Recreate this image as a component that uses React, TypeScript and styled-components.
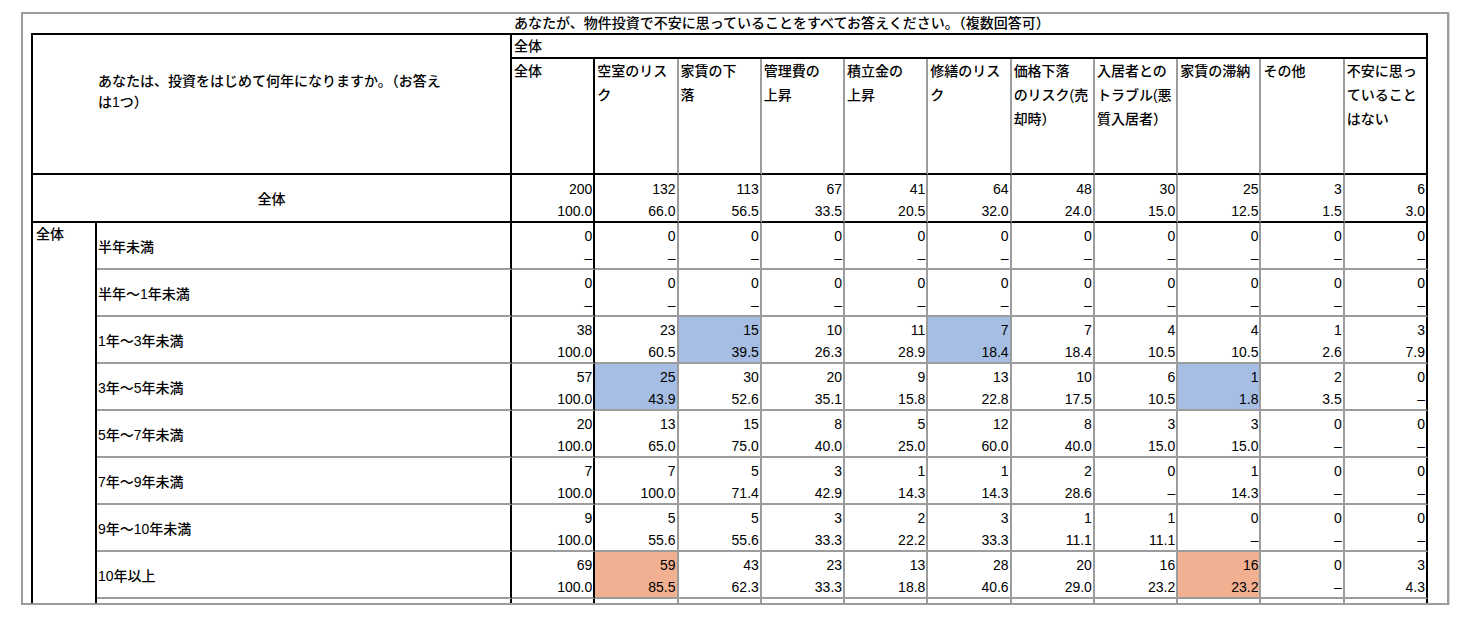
import React from "react";
import styled, { createGlobalStyle } from "styled-components";

const GlobalStyle = createGlobalStyle`
  html, body { margin: 0; padding: 0; background: #fff; }
  body {
    font-family: "Liberation Sans", "Noto Sans CJK JP", sans-serif;
    color: #000;
  }
  *, *::before, *::after { box-sizing: border-box; }
`;

const SOLID = "2px solid #000";
const DOTTED = "2px solid #9c9c9c";

const Page = styled.div`
  padding: 12px 0 0 21px;
`;

const Frame = styled.div`
  width: 1428px;
  height: 593px;
  border: 2px solid #9c9c9c;
  box-shadow: 1px 1px 0 #d6d6d6;
  overflow: hidden;
  padding-left: 8px;
  background: #fff;
`;

const TitleRow = styled.div`
  display: grid;
  grid-template-columns: 480px 1fr;
  width: 1397px;
  height: 19px;
`;

const Title = styled.div`
  grid-column: 2;
  padding-left: 3px;
  font-size: 14px;
  font-weight: 500;
  line-height: 19px;
  white-space: nowrap;
`;

const Sheet = styled.div`
  display: grid;
  width: 1397px;
  grid-template-columns: 64px 415px repeat(11, 1fr);
  grid-template-rows: 24px 116px 48px repeat(9, 47px);
  border-left: ${SOLID};
  border-top: ${SOLID};
`;

const Corner = styled.div`
  grid-column: 1 / 3;
  grid-row: 1 / 3;
  border-right: ${SOLID};
  border-bottom: ${SOLID};
  padding: 36px 0 0 65px;
  font-size: 14px;
  font-weight: 500;
  line-height: 21px;
`;

const SuperHead = styled.div`
  grid-column: 3 / -1;
  grid-row: 1;
  border-right: ${SOLID};
  border-bottom: ${SOLID};
  padding-left: 2px;
  font-size: 14px;
  font-weight: 500;
  line-height: 22px;
`;

type Edge = "solid" | "dotted";

const HeadCell = styled.div<{ $right: Edge }>`
  grid-row: 2;
  border-right: ${(p) => (p.$right === "solid" ? SOLID : DOTTED)};
  border-bottom: ${SOLID};
  padding-left: 2px;
  font-size: 14px;
  font-weight: 500;
  line-height: 24px;
  white-space: nowrap;
`;

const TotalLabel = styled.div`
  grid-column: 1 / 3;
  grid-row: 3;
  border-right: ${SOLID};
  border-bottom: ${SOLID};
  display: flex;
  align-items: center;
  justify-content: center;
  font-size: 14px;
  font-weight: 500;
`;

const GroupLabel = styled.div`
  grid-column: 1;
  grid-row: 4 / span 9;
  border-right: ${SOLID};
  padding: 1px 3px;
  font-size: 14px;
  font-weight: 500;
  line-height: 20px;
`;

const RowLabel = styled.div`
  grid-column: 2;
  border-right: ${SOLID};
  border-bottom: ${DOTTED};
  display: flex;
  align-items: center;
  padding-left: 1px;
  font-size: 14px;
  font-weight: 500;
  white-space: nowrap;
`;

type Tone = "none" | "blue" | "orange";

const TONES: Record<Tone, string> = {
  none: "transparent",
  blue: "#a6bee3",
  orange: "#f2b092",
};

const DataCell = styled.div<{ $right: Edge; $total?: boolean; $tone: Tone }>`
  border-right: ${(p) => (p.$right === "solid" ? SOLID : DOTTED)};
  border-bottom: ${(p) => (p.$total ? SOLID : DOTTED)};
  background: ${(p) => TONES[p.$tone]};
  padding: ${(p) => (p.$total ? "3px" : "2px")} 1px 0 0;
  display: flex;
  flex-direction: column;
`;

const Num = styled.div`
  font-size: 14px;
  line-height: 22px;
  text-align: right;
  white-space: nowrap;
`;

const headers: string[][] = [
  ["全体"],
  ["空室のリス", "ク"],
  ["家賃の下", "落"],
  ["管理費の", "上昇"],
  ["積立金の", "上昇"],
  ["修繕のリス", "ク"],
  ["価格下落", "のリスク(売", "却時）"],
  ["入居者との", "トラブル(悪", "質入居者）"],
  ["家賃の滞納"],
  ["その他"],
  ["不安に思っ", "ていること", "はない"],
];

type Cell = [string, string, Tone?];

const total: Cell[] = [
  ["200", "100.0"],
  ["132", "66.0"],
  ["113", "56.5"],
  ["67", "33.5"],
  ["41", "20.5"],
  ["64", "32.0"],
  ["48", "24.0"],
  ["30", "15.0"],
  ["25", "12.5"],
  ["3", "1.5"],
  ["6", "3.0"],
];

const Z: Cell = ["0", "–"];
const zeros: Cell[] = Array.from({ length: 11 }, () => Z);

const rows: { label: string; cells: Cell[] }[] = [
  { label: "半年未満", cells: zeros },
  { label: "半年～1年未満", cells: zeros },
  {
    label: "1年～3年未満",
    cells: [
      ["38", "100.0"],
      ["23", "60.5"],
      ["15", "39.5", "blue"],
      ["10", "26.3"],
      ["11", "28.9"],
      ["7", "18.4", "blue"],
      ["7", "18.4"],
      ["4", "10.5"],
      ["4", "10.5"],
      ["1", "2.6"],
      ["3", "7.9"],
    ],
  },
  {
    label: "3年～5年未満",
    cells: [
      ["57", "100.0"],
      ["25", "43.9", "blue"],
      ["30", "52.6"],
      ["20", "35.1"],
      ["9", "15.8"],
      ["13", "22.8"],
      ["10", "17.5"],
      ["6", "10.5"],
      ["1", "1.8", "blue"],
      ["2", "3.5"],
      ["0", "–"],
    ],
  },
  {
    label: "5年～7年未満",
    cells: [
      ["20", "100.0"],
      ["13", "65.0"],
      ["15", "75.0"],
      ["8", "40.0"],
      ["5", "25.0"],
      ["12", "60.0"],
      ["8", "40.0"],
      ["3", "15.0"],
      ["3", "15.0"],
      ["0", "–"],
      ["0", "–"],
    ],
  },
  {
    label: "7年～9年未満",
    cells: [
      ["7", "100.0"],
      ["7", "100.0"],
      ["5", "71.4"],
      ["3", "42.9"],
      ["1", "14.3"],
      ["1", "14.3"],
      ["2", "28.6"],
      ["0", "–"],
      ["1", "14.3"],
      ["0", "–"],
      ["0", "–"],
    ],
  },
  {
    label: "9年～10年未満",
    cells: [
      ["9", "100.0"],
      ["5", "55.6"],
      ["5", "55.6"],
      ["3", "33.3"],
      ["2", "22.2"],
      ["3", "33.3"],
      ["1", "11.1"],
      ["1", "11.1"],
      ["0", "–"],
      ["0", "–"],
      ["0", "–"],
    ],
  },
  {
    label: "10年以上",
    cells: [
      ["69", "100.0"],
      ["59", "85.5", "orange"],
      ["43", "62.3"],
      ["23", "33.3"],
      ["13", "18.8"],
      ["28", "40.6"],
      ["20", "29.0"],
      ["16", "23.2"],
      ["16", "23.2", "orange"],
      ["0", "–"],
      ["3", "4.3"],
    ],
  },
];

const edgeFor = (i: number): Edge => (i === 0 || i === 10 ? "solid" : "dotted");

const blank: Cell[] = Array.from({ length: 11 }, () => ["", ""] as Cell);

export default function App() {
  return (
    <Page>
      <GlobalStyle />
      <Frame>
        <TitleRow>
          <Title>あなたが、物件投資で不安に思っていることをすべてお答えください。（複数回答可）</Title>
        </TitleRow>
        <Sheet>
          <Corner>
            あなたは、投資をはじめて何年になりますか。（お答え
            <br />
            は1つ）
          </Corner>
          <SuperHead>全体</SuperHead>
          {headers.map((lines, i) => (
            <HeadCell key={`h${i}`} $right={edgeFor(i)}>
              {lines.map((l, j) => (
                <div key={j}>{l}</div>
              ))}
            </HeadCell>
          ))}

          <TotalLabel>全体</TotalLabel>
          {total.map(([a, b], i) => (
            <DataCell key={`t${i}`} $right={edgeFor(i)} $total $tone="none">
              <Num>{a}</Num>
              <Num>{b}</Num>
            </DataCell>
          ))}

          <GroupLabel>全体</GroupLabel>
          {[...rows, { label: "", cells: blank }].map((row, r) => (
            <React.Fragment key={`r${r}`}>
              <RowLabel>{row.label}</RowLabel>
              {row.cells.map(([a, b, tone], i) => (
                <DataCell key={`c${r}-${i}`} $right={edgeFor(i)} $tone={tone ?? "none"}>
                  <Num>{a}</Num>
                  <Num>{b}</Num>
                </DataCell>
              ))}
            </React.Fragment>
          ))}
        </Sheet>
      </Frame>
    </Page>
  );
}
